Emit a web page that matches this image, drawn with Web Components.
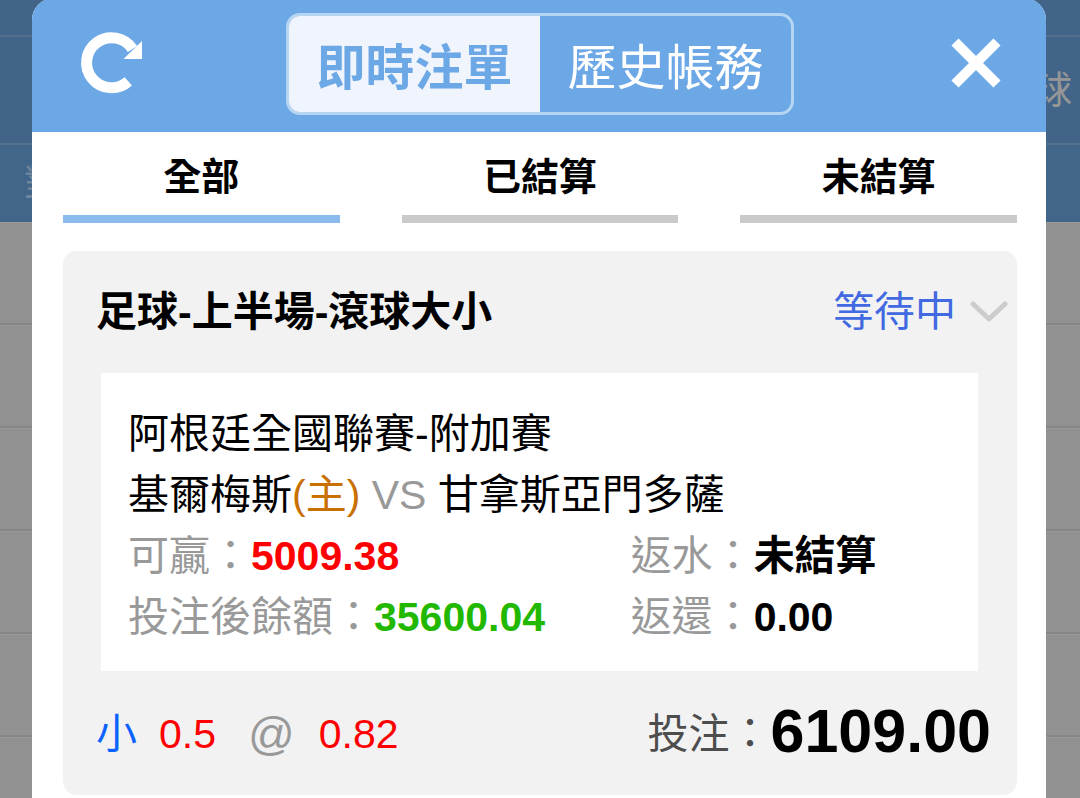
<!DOCTYPE html>
<html lang="zh-Hant">
<head>
<meta charset="utf-8">
<meta name="viewport" content="width=device-width, initial-scale=1">
<title>即時注單</title>
<style>
    body {
        margin: 0;
        font-family: "Liberation Sans", "Noto Sans CJK TC", sans-serif;
        font-size: 41px;
        line-height: 61px;
        color: #000;
        background: #919191;
        overflow: hidden;
    }
</style>
</head>
<body>
<bet-app></bet-app>

<script>
// the dimmed page behind the dialog
class DimmedPage extends HTMLElement {
    constructor() {
        super();
        this.attachShadow({mode: 'open'});
    }

    connectedCallback() {
        this.shadowRoot.innerHTML = `
            <style>
            :host {
                display: block;
                color: #969696;
                font-size: 38px;
            }
            div {
                box-sizing: border-box;
                display: flex;
                align-items: center;
                justify-content: space-between;
                padding: 0 8px 0 24px;
            }
            .top {
                height: 37px;
                background: #426488;
                border-bottom: 2px solid #53708f;
            }
            .nav {
                height: 108px;
                background: #426488;
                border-bottom: 2px solid #53708f;
                justify-content: flex-end;
            }
            .sub {
                height: 77px;
                background: #42658a;
                color: #71859b;
            }
            .row {
                height: 103px;
                border-top: 1px solid #999;
                border-bottom: 2px solid #868686;
            }
            </style>
            <div class="top"></div>
            <div class="nav"><span>球</span></div>
            <div class="sub"><span>對</span></div>
            <div class="row"></div>
            <div class="row"></div>
            <div class="row"></div>
            <div class="row"></div>
            <div class="row"></div>
            <div class="row"></div>
        `;
    }
}

class BetHeader extends HTMLElement {
    constructor() {
        super();
        this.attachShadow({mode: 'open'});
    }

    connectedCallback() {
        this.shadowRoot.innerHTML = `
            <style>
            :host {
                display: grid;
                grid-template-columns: 1fr auto 1fr;
                align-items: center;
                box-sizing: border-box;
                height: 134px;
                padding: 0 40px 2px 42px;
                background: #6ca8e6;
            }
            button {
                font: inherit;
                margin: 0;
                padding: 0;
                border: 0;
                background: none;
                color: #fff;
            }
            .icon {
                display: flex;
                justify-self: start;
            }
            .close {
                justify-self: end;
            }
            .segment {
                display: flex;
                box-sizing: border-box;
                width: 508px;
                height: 102px;
                border: 3px solid #b4d6f3;
                border-radius: 14px;
                overflow: hidden;
                font-size: 49px;
            }
            .segment button {
                flex: 1;
                padding-top: 8px;
            }
            .segment .on {
                background: #f0f5fd;
                color: #6ca8e6;
                font-weight: bold;
            }
            </style>
            <button class="icon" aria-label="重新整理">
                <svg width="76" height="76" viewBox="0 0 76 76">
                    <path d="M54.3 55.3A25 25 0 1 1 58.5 23" fill="none" stroke="#fff" stroke-width="11"/>
                    <path d="M68 15v18H49.5z" fill="#fff"/>
                </svg>
            </button>
            <div class="segment">
                <button class="on">即時注單</button>
                <button>歷史帳務</button>
            </div>
            <button class="icon close" aria-label="關閉">
                <svg width="60" height="60" viewBox="0 0 60 60">
                    <path d="M9 8L51 50M51 8L9 50" stroke="#fff" stroke-width="10"/>
                </svg>
            </button>
        `;
    }
}

class BetTabs extends HTMLElement {
    constructor() {
        super();
        this.attachShadow({mode: 'open'});
    }

    connectedCallback() {
        this.shadowRoot.innerHTML = `
            <style>
            :host {
                display: flex;
                justify-content: space-between;
                padding: 15px 29px 28px 31px;
            }
            button {
                width: 29%;
                margin: 0;
                padding: 0 0 8px;
                border: 0;
                border-bottom: 8px solid #cacaca;
                background: none;
                color: #000;
                font: inherit;
                font-size: 38px;
                line-height: 60px;
                font-weight: bold;
            }
            .on {
                border-color: #8bbbed;
            }
            </style>
            <button class="on">全部</button>
            <button>已結算</button>
            <button>未結算</button>
        `;
    }
}

// label and value, the value is slotted in
class BetField extends HTMLElement {
    constructor() {
        super();
        this.attachShadow({mode: 'open'});
    }

    connectedCallback() {
        this.shadowRoot.innerHTML = `
            <style>
            :host {
                display: block;
                white-space: nowrap;
            }
            span {
                color: #999;
            }
            b {
                color: var(--value-color, #000);
            }
            </style>
            <span>${this.getAttribute('label')}：</span><b><slot></slot></b>
        `;
    }
}

class BetCard extends HTMLElement {
    constructor() {
        super();
        this.attachShadow({mode: 'open'});
    }

    connectedCallback() {
        this.shadowRoot.innerHTML = `
            <style>
            :host {
                display: block;
                margin: 0 29px 0 31px;
                background: #f2f2f2;
                border-radius: 14px;
                white-space: nowrap;
            }
            header {
                display: flex;
                align-items: center;
                height: 122px;
                padding: 0 9px 0 33px;
            }
            h2 {
                flex: 1;
                margin: 0;
                font-size: 41px;
                font-weight: bold;
            }
            .state {
                display: flex;
                align-items: center;
                gap: 14px;
                margin: 0;
                padding: 0;
                border: 0;
                background: none;
                font: inherit;
                color: #4169e1;
            }
            .detail {
                margin: 0 39px 0 38px;
                padding: 31px 26px 23px 27px;
                background: #fff;
            }
            .home {
                color: #c87000;
            }
            .vs {
                color: #999;
            }
            .fields {
                display: grid;
                grid-template-columns: 61% 39%;
            }
            .green {
                --value-color: #22b800;
            }
            .red {
                --value-color: #f00;
            }
            footer, .stake {
                display: flex;
                align-items: flex-end;
            }
            footer {
                padding: 26px 26px 30px 33px;
            }
            .pick {
                color: #0a63ff;
                margin-right: 22px;
            }
            .odds {
                color: #f00;
            }
            .at {
                color: #999;
                font-size: 46px;
                margin: 0 24px 0 32px;
            }
            .stake {
                margin-left: auto;
                color: #4d4d4d;
            }
            .stake b {
                color: #000;
                font-size: 61px;
                line-height: 68px;
            }
            </style>
            <header>
                <h2>足球-上半場-滾球大小</h2>
                <button class="state">等待中
                    <svg width="38" height="24" viewBox="0 0 38 24">
                        <path d="M3 4L19 19L35 4" fill="none" stroke="#ccc" stroke-width="5" stroke-linecap="round" stroke-linejoin="round"/>
                    </svg>
                </button>
            </header>
            <div class="detail">
                <div>阿根廷全國聯賽-附加賽</div>
                <div>基爾梅斯<span class="home">(主)</span> <span class="vs">VS</span> 甘拿斯亞門多薩</div>
                <div class="fields">
                    <bet-field class="red" label="可贏">5009.38</bet-field>
                    <bet-field label="返水">未結算</bet-field>
                    <bet-field class="green" label="投注後餘額">35600.04</bet-field>
                    <bet-field label="返還">0.00</bet-field>
                </div>
            </div>
            <footer>
                <span class="pick">小</span>
                <span class="odds">0.5</span>
                <span class="at">@</span>
                <span class="odds">0.82</span>
                <span class="stake">投注：<b>6109.00</b></span>
            </footer>
        `;
    }
}

class BetApp extends HTMLElement {
    constructor() {
        super();
        this.attachShadow({mode: 'open'});
    }

    connectedCallback() {
        this.shadowRoot.innerHTML = `
            <style>
            :host {
                display: grid;
                height: 100vh;
                overflow: hidden;
            }
            dimmed-page, main {
                grid-area: 1 / 1;
            }
            main {
                position: relative;
                margin: -2px 34px 0 32px;
                background: #fff;
                border-radius: 22px 22px 0 0;
                overflow: hidden;
            }
            </style>
            <dimmed-page></dimmed-page>
            <main>
                <bet-header></bet-header>
                <bet-tabs></bet-tabs>
                <bet-card></bet-card>
            </main>
        `;
    }
}

customElements.define('dimmed-page', DimmedPage);
customElements.define('bet-header', BetHeader);
customElements.define('bet-tabs', BetTabs);
customElements.define('bet-field', BetField);
customElements.define('bet-card', BetCard);
customElements.define('bet-app', BetApp);
</script>
</body>
</html>
